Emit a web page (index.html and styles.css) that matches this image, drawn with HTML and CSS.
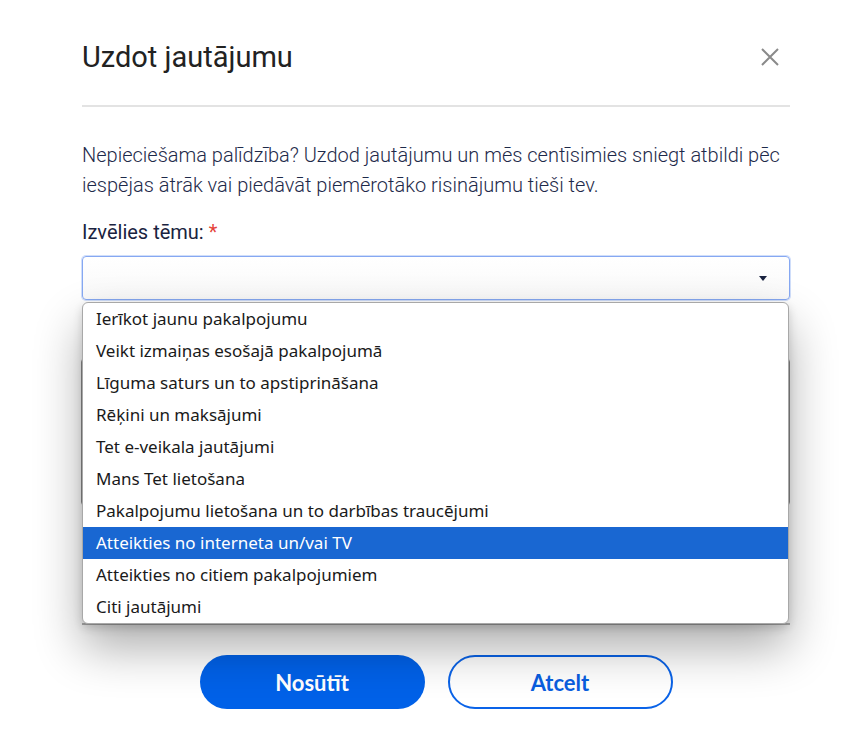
FILE: index.html
```html
<!DOCTYPE html>
<html lang="lv">
<head>
    <meta charset="UTF-8">
    <meta name="viewport" content="width=device-width, initial-scale=1.0">
    <title>Uzdot jautājumu</title>
    <link rel="stylesheet" href="styles.css">
</head>
<body>
    <div class="modal">
        <div class="modal-header">
            <h2>Uzdot jautājumu</h2>
            <button class="close" aria-label="Aizvērt">
                <svg width="20" height="20" viewBox="0 0 20 20">
                    <path d="M2 2 L18 18 M18 2 L2 18" stroke="#8a8a8a" stroke-width="2" fill="none"/>
                </svg>
            </button>
        </div>

        <div class="modal-body">
            <p class="intro">Nepieciešama palīdzība? Uzdod jautājumu un mēs centīsimies sniegt atbildi pēc iespējas ātrāk vai piedāvāt piemērotāko risinājumu tieši tev.</p>

            <label class="field-label">Izvēlies tēmu: <span class="required">*</span></label>
            <div class="select-wrap">
                <div class="select">
                    <span class="arrow"></span>
                </div>
                <ul class="options">
                    <li>Ierīkot jaunu pakalpojumu</li>
                    <li>Veikt izmaiņas esošajā pakalpojumā</li>
                    <li>Līguma saturs un to apstiprināšana</li>
                    <li>Rēķini un maksājumi</li>
                    <li>Tet e-veikala jautājumi</li>
                    <li>Mans Tet lietošana</li>
                    <li>Pakalpojumu lietošana un to darbības traucējumi</li>
                    <li class="selected">Atteikties no interneta un/vai TV</li>
                    <li>Atteikties no citiem pakalpojumiem</li>
                    <li>Citi jautājumi</li>
                </ul>
            </div>

            <div class="hidden-area"></div>
            <div class="hidden-line"></div>
        </div>

        <div class="actions">
            <button class="btn btn-primary">Nosūtīt</button>
            <button class="btn btn-outline">Atcelt</button>
        </div>
    </div>
</body>
</html>
```

FILE: styles.css
```css
body {
    margin: 0;
    background-color: #ffffff;
    font-family: Roboto, Arial, sans-serif;
}
.modal {
    width: 708px;
    padding: 0 75px 0 82px;
}
.modal-header {
    display: flex;
    justify-content: space-between;
    align-items: center;
    height: 105px;
    border-bottom: 2px solid #e3e3e3;
}
.modal-header h2 {
    margin: 8px 0 0 0;
    font-size: 29px;
    font-weight: 400;
    color: #222222;
}
.close {
    background: none;
    border: none;
    padding: 0;
    margin: 8px 10px 0 0;
    width: 20px;
    height: 20px;
    cursor: pointer;
}
.modal-body {
    padding-top: 33px;
}
.intro {
    margin: 0 0 20px 0;
    font-size: 20px;
    font-weight: 300;
    line-height: 30px;
    color: #1e2a4a;
}
.field-label {
    display: block;
    font-size: 20px;
    line-height: 24px;
    color: #1a2340;
    margin-bottom: 12px;
}
.required {
    color: #e5433a;
}
.select-wrap {
    position: relative;
}
.select {
    height: 42px;
    border: 1px solid #86a8f2;
    border-radius: 4px;
    box-shadow: 0 0 0 1px rgba(120, 160, 240, 0.35);
    background: linear-gradient(#ffffff, #f9f9f9);
    display: flex;
    justify-content: flex-end;
    align-items: center;
    padding-right: 22px;
}
.arrow {
    width: 0;
    height: 0;
    border-left: 4px solid transparent;
    border-right: 4px solid transparent;
    border-top: 5px solid #1a2340;
}
.options {
    position: absolute;
    top: 46px;
    left: 0;
    width: 705px;
    margin: 0;
    padding: 0;
    list-style: none;
    background: #ffffff;
    border: 1px solid #a8a8a8;
    border-radius: 6px;
    overflow: hidden;
    box-shadow: 0 24px 48px rgba(0, 0, 0, 0.32), 0 4px 10px rgba(0, 0, 0, 0.16);
    z-index: 2;
    font-family: "Noto Sans", "Open Sans", sans-serif;
}
.options li {
    height: 32px;
    line-height: 32px;
    padding-left: 13px;
    font-size: 17px;
    color: #1a1a1a;
}
.options li.selected {
    background-color: #1967d2;
    color: #ffffff;
}
.hidden-area {
    margin-top: 58px;
    height: 146px;
    border: 1px solid #8c8c8c;
    border-radius: 4px;
    margin-left: -1px;
}
.hidden-line {
    margin-top: 117px;
    border-bottom: 2px solid #b4b4b4;
}
.actions {
    display: flex;
    justify-content: center;
    gap: 23px;
    padding-top: 30px;
}
.btn {
    width: 225px;
    height: 54px;
    border-radius: 27px;
    font-family: Lato, Arial, sans-serif;
    font-size: 22px;
    font-weight: 700;
    cursor: pointer;
}
.btn-primary {
    background-color: #0061e8;
    border: none;
    color: #ffffff;
}
.btn-outline {
    background-color: #ffffff;
    border: 2px solid #0a63e8;
    color: #0a5ee0;
}
```
